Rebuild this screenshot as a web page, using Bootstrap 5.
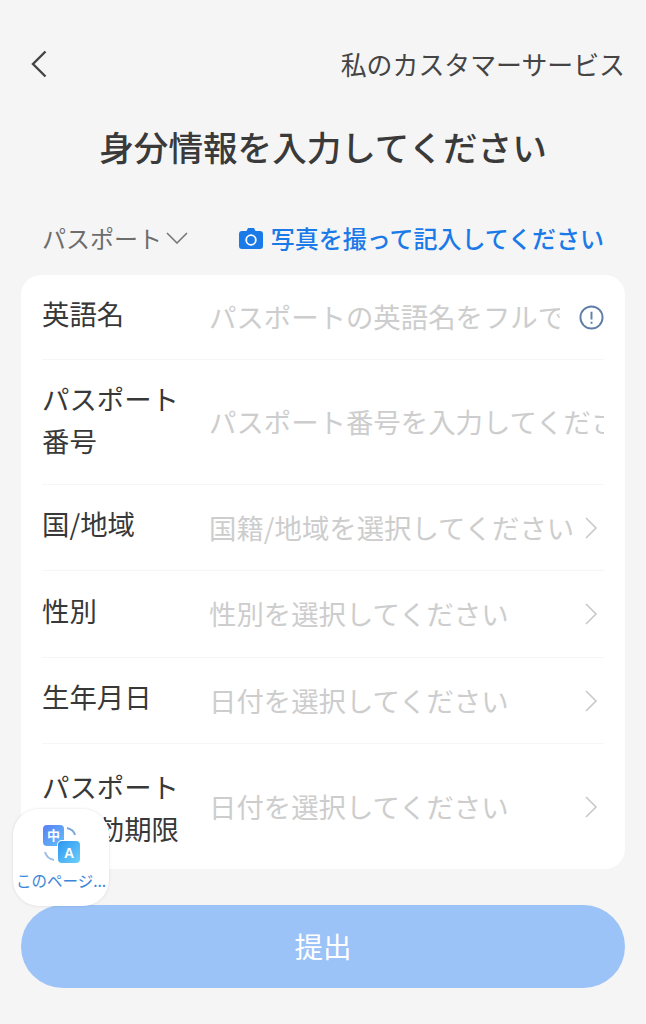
<!DOCTYPE html>
<html lang="ja">
<head>
  <meta charset="UTF-8">
  <title>身分情報を入力してください</title>
  <meta name="viewport" content="width=device-width, initial-scale=1">
  <link href="https://cdn.jsdelivr.net/npm/bootstrap@5.3.0/dist/css/bootstrap.min.css" rel="stylesheet">
  <style>
    body { background: #f5f5f5; font-family: "Noto Sans CJK JP", "Noto Sans", sans-serif; color: #333; height: 1024px; overflow: hidden; }
    .page-wrap { padding: 0 21px; }
    .top-bar { height: 52px; margin-top: 38px; padding: 0 0 0 9px; }
    .help-text { font-size: 25.9px; color: #444; white-space: nowrap; }
    .page-title { font-size: 34.6px; font-weight: 500; line-height: 48px; margin: 32px 0 0; color: #3a3a3a; text-align: center; }
    .doc-bar { height: 40px; margin-top: 48px; padding: 0 21px; font-size: 24px; }
    .doc-type { color: #6d6d6d; }
    .photo-link { color: #1a7ae8; font-weight: 500; text-decoration: none; }
    .form-box { background: #fff; border-radius: 20px; margin-top: 17px; padding: 0 21px; height: 594px; }
    .form-line { border-bottom: 1px solid #f6f6f6; font-size: 27.4px; }
    .form-line:last-child { border-bottom: 0; }
    .line-first { height: 85px; }
    .line-s { height: 86px; }
    .line-m { height: 87px; }
    .line-l { height: 125px; }
    .field-name { width: 167px; flex: none; line-height: 42px; color: #383838; margin-bottom: 9px; }
    .line-l .field-name { margin-bottom: 6px; }
    .line-l.line-end .field-name { margin-bottom: 0; }
    .field-hint { color: #cdcdcd; white-space: nowrap; overflow: hidden; flex: 1 1 0; min-width: 0; }
    .hint-short { margin-right: 19px; }
    .row-arrow { margin: 0 6px 0 10px; flex: none; }
    .submit-btn { background: #9cc3f8; border: 0; border-radius: 42px; color: #fff; font-size: 28.5px; height: 83px; width: 100%; margin-top: 36px; }
    .submit-btn:hover, .submit-btn:disabled { background: #9cc3f8; color: #fff; opacity: 1; }
    .translate-float { position: absolute; left: 13px; top: 809px; width: 96px; height: 97px; background: #fff; border-radius: 26px; box-shadow: 0 0 3px rgba(0,0,0,.12); }
    .translate-label { font-size: 15.5px; color: #3a86d8; line-height: 18px; white-space: nowrap; }
  </style>
</head>
<body>
  <div class="page-wrap">
    <div class="top-bar d-flex justify-content-between align-items-center">
      <svg width="18" height="28" viewBox="0 0 18 28" fill="none" stroke="#444" stroke-width="2.4"><path d="M15.5 1.5 3 14l12.5 12.5"/></svg>
      <span class="help-text">私のカスタマーサービス</span>
    </div>
    <h1 class="page-title">身分情報を入力してください</h1>
    <div class="doc-bar d-flex justify-content-between align-items-center">
      <span class="doc-type d-flex align-items-center gap-1">パスポート
        <svg width="22" height="12" viewBox="0 0 22 12" fill="none" stroke="#777" stroke-width="1.6"><path d="M1 1l10 10L21 1"/></svg>
      </span>
      <a class="photo-link d-flex align-items-center gap-2" href="#">
        <svg width="24" height="21" viewBox="0 0 24 21"><path fill="#1a7ae8" d="M3 3h4.500L9 0h6l1.500 3H21a3 3 0 0 1 3 3v12a3 3 0 0 1-3 3H3a3 3 0 0 1-3-3V6a3 3 0 0 1 3-3z"/><circle cx="12" cy="12" r="4.800" fill="none" stroke="#fff" stroke-width="1.800"/></svg>
        写真を撮って記入してください
      </a>
    </div>
    <div class="form-box">
      <div class="form-line line-first d-flex align-items-center">
        <div class="field-name">英語名</div>
        <div class="field-hint hint-short">パスポートの英語名をフルで入力してください</div>
        <svg width="25" height="25" viewBox="0 0 26 26" fill="none" stroke="#5f7fa8" stroke-width="2"><circle cx="13" cy="13" r="11.500"/><path d="M13 7v8M13 17.500v2"/></svg>
      </div>
      <div class="form-line line-l d-flex align-items-center">
        <div class="field-name">パスポート<br>番号</div>
        <div class="field-hint">パスポート番号を入力してください</div>
      </div>
      <div class="form-line line-s d-flex align-items-center">
        <div class="field-name">国/地域</div>
        <div class="field-hint">国籍/地域を選択してください</div>
        <svg class="row-arrow" width="14" height="24" viewBox="0 0 14 24" fill="none" stroke="#c9c9c9" stroke-width="1.600"><path d="M2 2l10 10L2 22"/></svg>
      </div>
      <div class="form-line line-m d-flex align-items-center">
        <div class="field-name">性別</div>
        <div class="field-hint">性別を選択してください</div>
        <svg class="row-arrow" width="14" height="24" viewBox="0 0 14 24" fill="none" stroke="#c9c9c9" stroke-width="1.600"><path d="M2 2l10 10L2 22"/></svg>
      </div>
      <div class="form-line line-s d-flex align-items-center">
        <div class="field-name">生年月日</div>
        <div class="field-hint">日付を選択してください</div>
        <svg class="row-arrow" width="14" height="24" viewBox="0 0 14 24" fill="none" stroke="#c9c9c9" stroke-width="1.600"><path d="M2 2l10 10L2 22"/></svg>
      </div>
      <div class="form-line line-l line-end d-flex align-items-center">
        <div class="field-name">パスポート<br>の有効期限</div>
        <div class="field-hint">日付を選択してください</div>
        <svg class="row-arrow" width="14" height="24" viewBox="0 0 14 24" fill="none" stroke="#c9c9c9" stroke-width="1.600"><path d="M2 2l10 10L2 22"/></svg>
      </div>
    </div>
    <button type="button" class="btn submit-btn">提出</button>
  </div>

  <div class="translate-float d-flex flex-column align-items-center pt-3">
    <svg width="38" height="38" viewBox="0 0 38 38">
      <defs>
        <linearGradient id="gradZh" x1="0" y1="0" x2="1" y2="1"><stop offset="0" stop-color="#5a7ff5"/><stop offset="1" stop-color="#62c0f8"/></linearGradient>
        <linearGradient id="gradEn" x1="0" y1="0" x2="1" y2="1"><stop offset="0" stop-color="#2e95f0"/><stop offset="1" stop-color="#6cd0fa"/></linearGradient>
      </defs>
      <rect x="1" y="0" width="21" height="21" rx="4" fill="url(#gradZh)"/>
      <rect x="15" y="15" width="23" height="23" rx="5" fill="#fff"/>
      <rect x="16" y="16" width="22" height="22" rx="4" fill="url(#gradEn)"/>
      <path d="M25 3c4 1 7 3 8 7" fill="none" stroke="#7fa8d8" stroke-width="2"/>
      <path d="M3 27c1 4 4 7 9 8" fill="none" stroke="#9fc0e6" stroke-width="2"/>
      <text x="11.500" y="15" font-size="13" font-weight="700" fill="#fff" text-anchor="middle" font-family="Noto Sans CJK SC, sans-serif">中</text>
      <text x="27" y="32.500" font-size="14" font-weight="700" fill="#fff" text-anchor="middle" font-family="Liberation Sans, sans-serif">A</text>
    </svg>
    <div class="translate-label mt-2">このページ...</div>
  </div>

  <script src="https://cdn.jsdelivr.net/npm/bootstrap@5.3.0/dist/js/bootstrap.bundle.min.js"></script>
</body>
</html>
